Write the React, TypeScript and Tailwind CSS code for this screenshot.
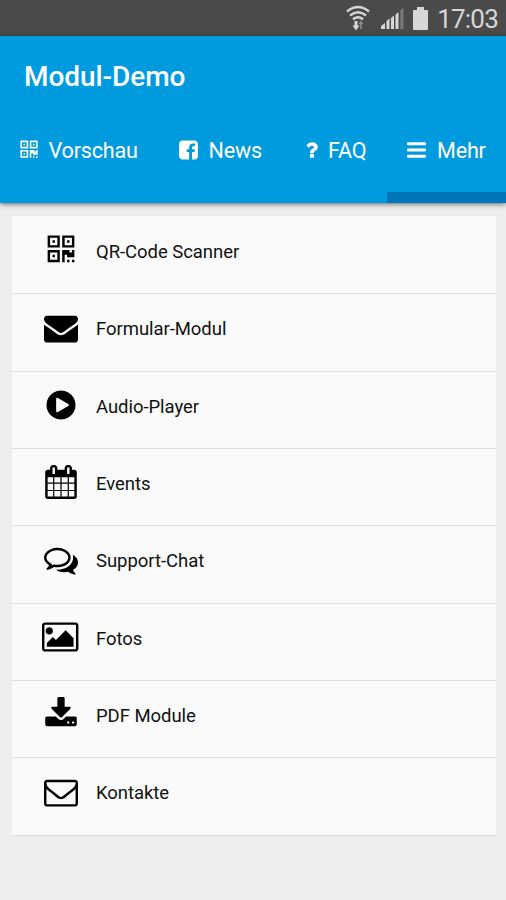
const paths = {
  qrcode:
    'M576 1152v128h-128v-128h128zm0-768v128h-128v-128h128zm768 0v128h-128v-128h128zm-1024 1023h384v-383h-384v383zm0-767h384v-384h-384v384zm768 0h384v-384h-384v384zm-256 256v640h-640v-640h640zm512 512v128h-128v-128h128zm256 0v128h-128v-128h128zm0-512v384h-384v-128h-128v384h-128v-640h384v128h128v-128h128zm-768-768v640h-640v-640h640zm768 0v640h-640v-640h640z',
  envelope:
    'M1792 710v794q0 66-47 113t-113 47h-1472q-66 0-113-47t-47-113v-794q44 49 101 87 362 246 497 345 57 42 92.5 65.5t94.5 48 110 24.5h2q51 0 110-24.5t94.5-48 92.5-65.5q170-123 498-345 57-39 100-87zm0-294q0 79-49 151t-122 123q-376 261-468 325-10 7-42.5 31t-54 38.5-52 32.5-57.5 27-50 9h-2q-23 0-50-9t-57.5-27-52-32.5-54-38.5-42.5-31q-91-64-262-182.5t-205-142.5q-62-42-117-115.5t-55-136.5q0-78 41.5-130t118.5-52h1472q65 0 112.5 47t47.5 113z',
  play:
    'M896 128q209 0 385.5 103t279.5 279.5 103 385.5-103 385.5-279.5 279.5-385.5 103-385.5-103-279.5-279.5-103-385.5 103-385.5 279.5-279.5 385.5-103zm384 823q32-18 32-55t-32-55l-544-320q-31-19-64-1-32 19-32 56v640q0 37 32 56 16 8 32 8 17 0 32-9z',
  calendar:
    'M192 1664h288v-288h-288v288zm352 0h320v-288h-320v288zm-352-352h288v-320h-288v320zm352 0h320v-320h-320v320zm-352-384h288v-288h-288v288zm736 736h320v-288h-320v288zm-384-736h320v-288h-320v288zm768 736h288v-288h-288v288zm-384-352h320v-320h-320v320zm-352-864v-288q0-13-9.5-22.5t-22.5-9.5h-64q-13 0-22.5 9.5t-9.5 22.5v288q0 13 9.5 22.5t22.5 9.5h64q13 0 22.5-9.5t9.5-22.5zm736 864h288v-320h-288v320zm-384-384h320v-288h-320v288zm384 0h288v-288h-288v288zm32-480v-288q0-13-9.5-22.5t-22.5-9.5h-64q-13 0-22.5 9.5t-9.5 22.5v288q0 13 9.5 22.5t22.5 9.5h64q13 0 22.5-9.5t9.5-22.5zm384-64v1280q0 52-38 90t-90 38h-1408q-52 0-90-38t-38-90v-1280q0-52 38-90t90-38h128v-96q0-66 47-113t113-47h64q66 0 113 47t47 113v96h384v-96q0-66 47-113t113-47h64q66 0 113 47t47 113v96h128q52 0 90 38t38 90z',
  comments:
    'M704 384q-153 0-286 52t-211.5 141-78.5 191q0 82 53 158t149 132l97 56-35 84q34-20 62-39l44-31 53 10q78 14 153 14 153 0 286-52t211.5-141 78.5-191-78.5-191-211.5-141-286-52zm0-128q191 0 353.5 68.5t256.5 186.5 94 257-94 257-256.5 186.5-353.5 68.5q-86 0-176-16-124 88-278 128-36 9-86 16h-3q-11 0-20.5-8t-11.5-21q-1-3-1-6.5t.5-6.5 2-6l2.5-5 3.5-5.5 4-5 4.5-5 4-4.5q5-6 23-25t26-29.5 22.5-29 25-38.5 20.5-44q-124-72-195-177t-71-224q0-139 94-257t256.5-186.5 353.5-68.5zm822 1169q10 24 20.5 44t25 38.5 22.5 29 26 29.5 23 25q1 1 4 4.5t4.5 5 4 5 3.5 5.5l2.5 5 2 6 .5 6.5-1 6.5q-3 14-13 22t-22 7q-50-7-86-16-154-40-278-128-90 16-176 16-271 0-472-132 58 4 88 4 161 0 309-45t264-129q125-92 192-212t67-254q0-77-23-152 129 71 204 178t75 230q0 120-71 224.5t-195 176.5z',
  picture:
    'M576 576q0 80-56 136t-136 56-136-56-56-136 56-136 136-56 136 56 56 136zm1088 384v448h-1408v-192l320-320 160 160 512-512zm96-704h-1600q-13 0-22.5 9.5t-9.5 22.5v1216q0 13 9.5 22.5t22.5 9.5h1600q13 0 22.5-9.5t9.5-22.5v-1216q0-13-9.5-22.5t-22.5-9.5zm160 32v1216q0 66-47 113t-113 47h-1600q-66 0-113-47t-47-113v-1216q0-66 47-113t113-47h1600q66 0 113 47t47 113z',
  download:
    'M1344 1344q0-26-19-45t-45-19-45 19-19 45 19 45 45 19 45-19 19-45zm256 0q0-26-19-45t-45-19-45 19-19 45 19 45 45 19 45-19 19-45zm128-224v320q0 40-28 68t-68 28h-1472q-40 0-68-28t-28-68v-320q0-40 28-68t68-28h465l135 136q58 56 136 56t136-56l136-136h464q40 0 68 28t28 68zm-325-569q17 41-14 70l-448 448q-18 19-45 19t-45-19l-448-448q-31-29-14-70 17-39 59-39h256v-448q0-26 19-45t45-19h256q26 0 45 19t19 45v448h256q42 0 59 39z',
  envelopeOutline:
    'M1664 1504v-768q-32 36-69 66-268 206-426 338-51 43-83 67t-86.5 48.5-102.5 24.5h-2q-48 0-102.5-24.5t-86.5-48.5-83-67q-158-132-426-338-37-30-69-66v768q0 13 9.5 22.5t22.5 9.5h1472q13 0 22.5-9.5t9.5-22.5zm0-1051v-24.5l-.5-13-3-12.5-5.5-9-9-7.5-14-2.5h-1472q-13 0-22.5 9.5t-9.5 22.5q0 168 147 284 193 152 401 317 6 5 35 29.5t46 37.5 44.5 31.5 50.5 27.5 43 9h2q20 0 43-9t50.5-27.5 44.5-31.5 46-37.5 35-29.5q208-165 401-317 54-43 100.5-115.5t46.5-131.5zm128-37v1088q0 66-47 113t-113 47h-1472q-66 0-113-47t-47-113v-1088q0-66 47-113t113-47h1472q66 0 113 47t47 113z',
  facebook:
    'M1376 128q119 0 203.5 84.5t84.5 203.5v960q0 119-84.5 203.5t-203.5 84.5h-188v-595h199l30-232h-229v-148q0-56 23.5-84t91.5-28l122-1v-207q-63-9-178-9-136 0-217.5 80t-81.5 226v171h-200v232h200v595h-532q-119 0-203.5-84.5t-84.5-203.5v-960q0-119 84.5-203.5t203.5-84.5h960z',
  question:
    'M1088 1256v240q0 16-12 28t-28 12h-240q-16 0-28-12t-12-28v-240q0-16 12-28t28-12h240q16 0 28 12t12 28zm316-600q0 54-15.5 101t-35 76.5-55 59.5-57.5 43.5-61 35.5q-41 23-68.5 65t-27.5 67q0 17-12 32.5t-28 15.5h-240q-15 0-25.5-18.5t-10.5-37.5v-45q0-83 65-156.5t143-108.5q59-27 84-56t25-76q0-42-46.5-74t-107.5-32q-65 0-108 29-35 25-107 115-13 16-31 16-12 0-25-8l-164-125q-13-10-15.5-25t5.5-28q160-266 464-266 80 0 161 31t146 83 106 127.5 41 158.5z',
  bars:
    'M1664 1344v128q0 26-19 45t-45 19h-1408q-26 0-45-19t-19-45v-128q0-26 19-45t45-19h1408q26 0 45 19t19 45zm0-512v128q0 26-19 45t-45 19h-1408q-26 0-45-19t-19-45v-128q0-26 19-45t45-19h1408q26 0 45 19t19 45zm0-512v128q0 26-19 45t-45 19h-1408q-26 0-45-19t-19-45v-128q0-26 19-45t45-19h1408q26 0 45 19t19 45z',
};

type IconName = keyof typeof paths;

const Icon = ({
  name,
  viewBox = '0 0 1792 1792',
  className,
}: {
  name: IconName;
  viewBox?: string;
  className: string;
}) => (
  <svg viewBox={viewBox} className={className} fill="currentColor">
    <path d={paths[name]} />
  </svg>
);

const tabs: { label: string; icon: IconName; viewBox: string; iconClass: string; className: string }[] = [
  { label: 'Vorschau', icon: 'qrcode', viewBox: '192 0 1408 1792', iconClass: 'w-[18px] mr-[10.5px]', className: 'w-[158.5px]' },
  { label: 'News', icon: 'facebook', viewBox: '128 0 1536 1792', iconClass: 'w-[19px] mr-[11px]', className: 'w-[126px]' },
  { label: 'FAQ', icon: 'question', viewBox: '360 0 1060 1792', iconClass: 'w-[13px] mr-[10.5px]', className: 'w-[102.5px]' },
  { label: 'Mehr', icon: 'bars', viewBox: '128 0 1536 1792', iconClass: 'w-[19px] mr-[11px]', className: 'w-[119px]' },
];

const items: { label: string; icon: IconName; viewBox?: string; size?: string }[] = [
  { label: 'QR-Code Scanner', icon: 'qrcode' },
  { label: 'Formular-Modul', icon: 'envelope' },
  { label: 'Audio-Player', icon: 'play' },
  { label: 'Events', icon: 'calendar' },
  { label: 'Support-Chat', icon: 'comments' },
  { label: 'Fotos', icon: 'picture', viewBox: '0 0 1920 1792', size: 'w-[36.4px]' },
  { label: 'PDF Module', icon: 'download' },
  { label: 'Kontakte', icon: 'envelopeOutline' },
];

const StatusBar = () => (
  <div className="flex h-9 items-center justify-end bg-[#4a4a4a] pr-2 text-[#d6d6d6]">
    <svg viewBox="0 0 24 26" className="mr-[11px] h-[26px] w-6" fill="none" stroke="currentColor" strokeWidth="2.4">
      <path d="M1 6.5Q12-2.5 23 6.5M4 10.5Q12 4 20 10.5M7 14.3Q12 10.3 17 14.3" />
      <path d="M10 16v6" strokeWidth="3" />
      <path d="M6.5 20.5h7L10 25.5z" fill="currentColor" stroke="none" />
      <path d="M15 24v-7" stroke="#8b8b8b" strokeWidth="1.6" />
      <path d="M12.5 19L15 15.5 17.5 19z" fill="#8b8b8b" stroke="none" />
    </svg>
    <svg viewBox="0 0 23 22" className="mr-[9px] h-[22px] w-[23px]">
      <path d="M0 22v-3l4-3v6zM5.5 22v-8l3-2.5V22zM10 22V11l3-2.5V22zM14.5 22V7.5l3-2.5v17z" fill="currentColor" />
      <path d="M19.3 22V3.5L22.5 0v22z" fill="#777" />
    </svg>
    <svg viewBox="0 0 15 23" className="mr-[9px] h-[23px] w-[15px]" fill="currentColor">
      <path d="M4 0h7v3h3q1 0 1 1v18q0 1-1 1H1q-1 0-1-1V4q0-1 1-1h3z" />
    </svg>
    <span className="mt-[2px] text-[26px] leading-none tracking-[-0.8px]">17:03</span>
  </div>
);

export default function App() {
  return (
    <div className="flex h-[900px] w-[506px] flex-col overflow-hidden bg-[#eee] font-['Roboto',sans-serif]">
      <StatusBar />

      <header className="flex h-[167px] flex-col bg-[#009bdf] text-white shadow-[0_1px_5px_rgba(0,0,0,0.6)]">
        <h1 className="px-6 pt-[25px] text-[28px] leading-8 font-medium tracking-[-0.05px]">Modul-Demo</h1>
        <nav className="mt-auto flex h-[103px]">
          {tabs.map((tab) => (
            <button
              key={tab.label}
              className={`flex shrink-0 items-center border-b-[11px] pt-[9px] pl-5 ${tab.className} ${
                tab.label === 'Mehr' ? 'border-[#0076ba]' : 'border-transparent'
              }`}
            >
              <Icon name={tab.icon} viewBox={tab.viewBox} className={`mb-[2px] h-[22px] shrink-0 ${tab.iconClass}`} />
              <span className="pt-[1px] text-[21.6px] leading-7 tracking-[-0.2px]">{tab.label}</span>
            </button>
          ))}
        </nav>
      </header>

      <main className="mr-[10px] ml-3 mt-[13px] flex flex-col bg-[#fafafa] pt-[1px]">
        {items.map((item) => (
          <div key={item.label} className="flex h-[77.35px] border-b-[1.5px] border-[#dedede] pl-[31px]">
            <div className="mt-[16.3px] flex w-[35px] shrink-0 justify-center">
              <Icon name={item.icon} viewBox={item.viewBox} className={`h-[34px] shrink-0 ${item.size ?? 'w-[34px]'}`} />
            </div>
            <span className="mt-[23px] ml-[18px] text-[18.5px] leading-6 tracking-[-0.05px] text-[#111]">{item.label}</span>
          </div>
        ))}
      </main>
    </div>
  );
}
